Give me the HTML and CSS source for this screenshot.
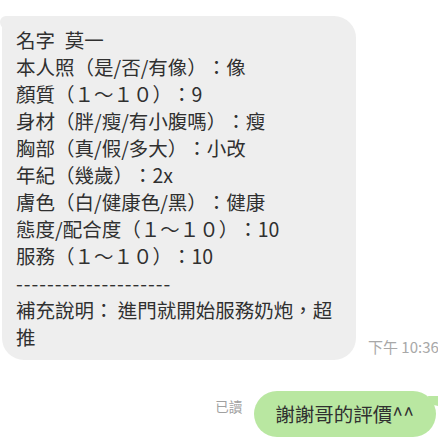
FILE: index.html
```html
<!DOCTYPE html>
<html lang="zh-Hant">
<head>
    <meta charset="UTF-8">
    <meta name="viewport" content="width=device-width, initial-scale=1.0">
    <title>聊天</title>
    <link rel="stylesheet" href="styles.css">
</head>
<body>

    <div class="chat">
        <!-- incoming message -->
        <div class="row row-in">
            <div class="bubble bubble-in">
                <p>名字&ensp;莫一</p>
                <p>本人照（是/否/有像）：像</p>
                <p>顏質（１～１０）：9</p>
                <p>身材（胖/瘦/有小腹嗎）：瘦</p>
                <p>胸部（真/假/多大）：小改</p>
                <p>年紀（幾歲）：2x</p>
                <p>膚色（白/健康色/黑）：健康</p>
                <p>態度/配合度（１～１０）：10</p>
                <p>服務（１～１０）：10</p>
                <p class="rule">--------------------</p>
                <p>補充說明： 進門就開始服務奶炮，超推</p>
            </div>
            <span class="time">下午 10:36</span>
        </div>

        <!-- outgoing message -->
        <div class="row row-out">
            <span class="read">已讀</span>
            <div class="bubble bubble-out">謝謝哥的評價^^</div>
        </div>
    </div>

</body>
</html>
```

FILE: styles.css
```css
html {
    overflow: hidden;
}
body {
    margin: 0;
    padding: 0;
    background-color: #fff;
    font-family: "Noto Sans CJK TC", "Noto Sans", sans-serif;
    color: #303030;
}
.chat {
    padding-top: 16px;
}
.row {
    display: flex;
}
.row-in {
    align-items: flex-end;
    gap: 12px;
    padding-left: 2px;
}
.row-out {
    justify-content: flex-end;
    align-items: flex-start;
    gap: 12px;
    margin-top: 31px;
    padding-right: 2px;
}
.bubble {
    position: relative;
    font-size: 19.5px;
    box-sizing: border-box;
    /* keep full-width brackets and colons at full width */
    text-spacing-trim: space-all;
    font-feature-settings: "chws" 0, "halt" 0;
}
.bubble-in {
    flex-shrink: 0;
    width: 354px;
    padding: 10px 18px 10px 14px;
    background-color: #eeeeee;
    border-radius: 6px 22px 22px 22px;
    line-height: 27px;
}
.bubble-in::before {
    content: "";
    position: absolute;
    left: -2px;
    top: 0;
    width: 8px;
    height: 14px;
    background-color: #eeeeee;
    border-radius: 6px 0 0 8px;
}
.bubble-in p {
    margin: 0;
}
.bubble-in .rule {
    letter-spacing: 1px;
}
.time {
    flex-shrink: 0;
    white-space: nowrap;
    font-size: 15px;
    color: #a8a8a8;
    margin-bottom: 3px;
}
.read {
    font-size: 13.5px;
    color: #a0a0a0;
    margin-top: 5px;
}
.bubble-out {
    height: 46px;
    line-height: 46px;
    padding: 0 22px 0 21px;
    background-color: #b9e7a1;
    border-radius: 23px;
    white-space: nowrap;
}
.bubble-out::after {
    content: "";
    position: absolute;
    right: -4px;
    top: 5px;
    width: 12px;
    height: 10px;
    background-color: #b9e7a1;
    border-radius: 0 2px 2px 10px;
}
```
